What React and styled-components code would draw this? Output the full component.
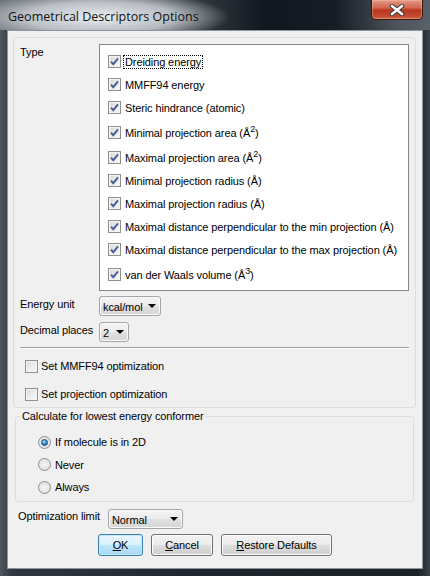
import React from 'react';
import styled, { createGlobalStyle } from 'styled-components';

const GlobalStyle = createGlobalStyle`
  html, body {
    margin: 0;
    padding: 0;
    background: #1a2128;
  }
  body {
    font-family: 'Liberation Sans', Arial, sans-serif;
    font-size: 11px;
    letter-spacing: -0.1px;
    color: #000;
  }
`;

const types = [
  { label: 'Dreiding energy', focus: true },
  { label: 'MMFF94 energy' },
  { label: 'Steric hindrance (atomic)' },
  { label: 'Minimal projection area (Å', sup: '2' },
  { label: 'Maximal projection area (Å', sup: '2' },
  { label: 'Minimal projection radius (Å)' },
  { label: 'Maximal projection radius (Å)' },
  { label: 'Maximal distance perpendicular to the min projection (Å)' },
  { label: 'Maximal distance perpendicular to the max projection (Å)' },
  { label: 'van der Waals volume (Å', sup: '3' },
];

const Check = () => (
  <CheckBox>
    <svg width='11' height='11' viewBox='0 0 11 11'>
      <path d='M2 5.6 L4.3 8.2 L9 2.4' fill='none' stroke='#4b5d98' strokeWidth='1.9' />
    </svg>
  </CheckBox>
);

const Arrow = () => (
  <svg width='8' height='4' viewBox='0 0 8 4'>
    <path d='M0 0 H8 L4 4 Z' fill='#000' />
  </svg>
);

const App = () => {
  return (
    <>
      <GlobalStyle />
      <Window>
        <TitleBar>
          <Title>Geometrical Descriptors Options</Title>
          <CloseButton>
            <svg width='16' height='12' viewBox='0 0 16 12'>
              <path d='M3 2 L13 10 M13 2 L3 10' stroke='#3a3a3a' strokeWidth='4.6' strokeLinecap='round' />
              <path d='M3 2 L13 10 M13 2 L3 10' stroke='#fff' strokeWidth='2.6' strokeLinecap='round' />
            </svg>
          </CloseButton>
        </TitleBar>
        <Client>
          <Panel>
            <TypeRow>
              <FieldLabel>Type</FieldLabel>
              <ListBox>
                {types.map((t) => (
                  <ListItem key={t.label} $tall={!!t.sup}>
                    <Check />
                    <ItemText $focus={t.focus}>
                      {t.label}
                      {t.sup && (
                        <>
                          <Sup>{t.sup}</Sup>)
                        </>
                      )}
                    </ItemText>
                  </ListItem>
                ))}
              </ListBox>
            </TypeRow>
            <FormRow $top={5}>
              <FieldLabel>Energy unit</FieldLabel>
              <Combo $w={62}>
                <span>kcal/mol</span>
                <Arrow />
              </Combo>
            </FormRow>
            <FormRow $top={6}>
              <FieldLabel>Decimal places</FieldLabel>
              <Combo $w={30}>
                <span>2</span>
                <Arrow />
              </Combo>
            </FormRow>
            <Separator />
            <OptionRow $top={7}>
              <EmptyBox />
              <span>Set MMFF94 optimization</span>
            </OptionRow>
            <OptionRow $top={8}>
              <EmptyBox />
              <span>Set projection optimization</span>
            </OptionRow>
          </Panel>
          <Group>
            <Legend>Calculate for lowest energy conformer</Legend>
            <RadioRow>
              <Radio $on />
              <span>If molecule is in 2D</span>
            </RadioRow>
            <RadioRow>
              <Radio />
              <span>Never</span>
            </RadioRow>
            <RadioRow>
              <Radio />
              <span>Always</span>
            </RadioRow>
          </Group>
          <LimitRow>
            <LimitLabel>Optimization limit</LimitLabel>
            <Combo $w={75} $h={20}>
              <span>Normal</span>
              <Arrow />
            </Combo>
          </LimitRow>
          <ButtonRow>
            <Button $w={45} $default>
              <U>O</U>K
            </Button>
            <Button $w={62}>
              <U>C</U>ancel
            </Button>
            <Button $w={111}>
              <U>R</U>estore Defaults
            </Button>
          </ButtonRow>
        </Client>
      </Window>
    </>
  );
};

const Window = styled.div`
  width: 430px;
  height: 576px;
  display: flex;
  flex-direction: column;
  box-sizing: border-box;
  background: linear-gradient(90deg, #4d545b 0%, #30373e 3%, #1d252c 50%, #1a2228 97%, #3a4249 100%);
`;

const TitleBar = styled.div`
  height: 30px;
  flex-shrink: 0;
  display: flex;
  align-items: flex-start;
  padding-left: 8px;
  background:
    radial-gradient(ellipse 130px 26px at 100px 17px, rgba(238, 241, 244, 0.97) 0%, rgba(210, 214, 219, 0.8) 58%, rgba(180, 186, 192, 0) 100%),
    linear-gradient(90deg, #6c7279 0%, #4a5158 35%, #10171e 62%, #161d24 78%, #4c535a 92%, #5a6168 100%);
`;

const Title = styled.div`
  font-family: 'Open Sans', 'Noto Sans', sans-serif;
  font-size: 12.5px;
  letter-spacing: 0;
  line-height: 33px;
  color: #121212;
  white-space: nowrap;
`;

const CloseButton = styled.div`
  margin-left: auto;
  margin-right: 7px;
  width: 52px;
  height: 20px;
  box-sizing: border-box;
  display: flex;
  align-items: center;
  justify-content: center;
  border: 1px solid #3b140c;
  border-top: none;
  border-radius: 0 0 5px 5px;
  background: linear-gradient(#e49a86 0%, #d2674e 42%, #b9371f 52%, #c24a2d 85%, #d36a4d 100%);
  box-shadow: inset 0 0 0 1px rgba(255, 210, 190, 0.35);
`;

const Client = styled.div`
  flex: 1;
  margin: 0 7px 7px 7px;
  border: 1px solid #8d969e;
  background: #f0f0f0;
  display: flex;
  flex-direction: column;
  padding: 6px 6px 0 5px;
`;

const Panel = styled.div`
  border: 1px solid #d8dee3;
  border-radius: 3px;
  padding: 6px 6px 3px 6px;
`;

const TypeRow = styled.div`
  display: grid;
  grid-template-columns: 79px 310px;
  align-items: start;
`;

const FieldLabel = styled.div`
  line-height: 13px;
  padding-top: 2px;
  white-space: nowrap;
`;

const ListBox = styled.div`
  box-sizing: border-box;
  height: 247px;
  border: 1px solid #828790;
  background: #fff;
  padding: 5px 0 0 8px;
`;

const ListItem = styled.div`
  display: flex;
  align-items: center;
  height: 23px;
  margin-top: ${(p) => (p.$tall ? 2 : 0)}px;
`;

const ItemText = styled.span`
  margin-left: 2px;
  padding: 0 1px;
  line-height: 12px;
  border: 1px ${(p) => (p.$focus ? 'dotted #000' : 'solid transparent')};
  white-space: nowrap;
`;

const Sup = styled.sup`
  font-size: 9px;
  vertical-align: 5px;
  line-height: 0;
`;

const CheckBox = styled.span`
  width: 13px;
  height: 13px;
  box-sizing: border-box;
  flex-shrink: 0;
  display: inline-flex;
  align-items: center;
  justify-content: center;
  border: 1px solid #8f8f8f;
  background: linear-gradient(135deg, #d8d8d8 0%, #eeeeee 60%, #f8f8f8 100%);
  box-shadow: inset 0 0 0 1px #f4f4f4;
`;

const EmptyBox = styled(CheckBox)`
  margin-right: 3px;
`;

const FormRow = styled.div`
  display: grid;
  grid-template-columns: 79px auto;
  justify-content: start;
  margin-top: ${(p) => p.$top}px;
`;

const Combo = styled.div`
  box-sizing: border-box;
  width: ${(p) => p.$w}px;
  height: ${(p) => p.$h || 20}px;
  display: flex;
  align-items: center;
  justify-content: space-between;
  padding: 0 4px 0 3px;
  border: 1px solid #a5a5a5;
  border-radius: 3px;
  background: linear-gradient(#f3f3f3 0%, #ececec 48%, #e0e0e0 52%, #d6d6d6 100%);
  box-shadow: inset 0 0 0 1px #fbfbfb;
  span {
    padding-top: 2px;
  }
`;

const Separator = styled.div`
  margin-top: 5px;
  border-top: 1px solid #a0a0a0;
  border-bottom: 1px solid #fff;
`;

const OptionRow = styled.div`
  display: flex;
  align-items: center;
  height: 20px;
  padding-left: 5px;
  margin-top: ${(p) => p.$top}px;
`;

const Group = styled.fieldset`
  margin: 2px 2px 0 2px;
  padding: 0 0 4px 0;
  border: 1px solid #d8dee3;
  border-radius: 3px;
  min-width: 0;
`;

const Legend = styled.legend`
  margin-left: 4px;
  padding: 0 2px;
  line-height: 13px;
`;

const RadioRow = styled.div`
  display: flex;
  align-items: center;
  height: 20px;
  padding-left: 22px;
  margin-top: 2.7px;
  &:first-of-type {
    margin-top: 9px;
  }
`;

const Radio = styled.span`
  width: 13px;
  height: 13px;
  box-sizing: border-box;
  border-radius: 50%;
  margin-right: 4px;
  border: 1px solid #8e8f8f;
  background: radial-gradient(circle at 50% 50%, #f6f6f6 0%, #e2e2e2 70%, #d0d0d0 100%);
  position: relative;
  &::after {
    content: '';
    display: ${(p) => (p.$on ? 'block' : 'none')};
    position: absolute;
    left: 2px;
    top: 2px;
    width: 7px;
    height: 7px;
    box-sizing: border-box;
    border-radius: 50%;
    border: 1px solid #1b4f7e;
    background: radial-gradient(circle at 40% 35%, #b8e3fa 0%, #3c91cf 45%, #15548f 100%);
  }
`;

const LimitRow = styled.div`
  display: flex;
  align-items: flex-start;
  margin-top: 7px;
  padding-left: 5px;
`;

const LimitLabel = styled.div`
  width: 90px;
  line-height: 13px;
  padding-top: 1px;
`;

const ButtonRow = styled.div`
  display: flex;
  gap: 8px;
  margin-top: 5px;
  padding-left: 85px;
`;

const Button = styled.div`
  box-sizing: border-box;
  width: ${(p) => p.$w}px;
  height: 22px;
  display: flex;
  align-items: center;
  justify-content: center;
  border: 1px solid ${(p) => (p.$default ? '#3c7fb1' : '#707070')};
  border-radius: 3px;
  background: ${(p) =>
    p.$default
      ? 'linear-gradient(#eaf6fd 0%, #d9f0fc 48%, #bee6fd 52%, #a7d9f5 100%)'
      : 'linear-gradient(#f2f2f2 0%, #ebebeb 48%, #dddddd 52%, #cfcfcf 100%)'};
  box-shadow: inset 0 0 0 1px ${(p) => (p.$default ? '#c7e8fb' : '#fcfcfc')};
`;

const U = styled.span`
  text-decoration: underline;
`;

export default App;
